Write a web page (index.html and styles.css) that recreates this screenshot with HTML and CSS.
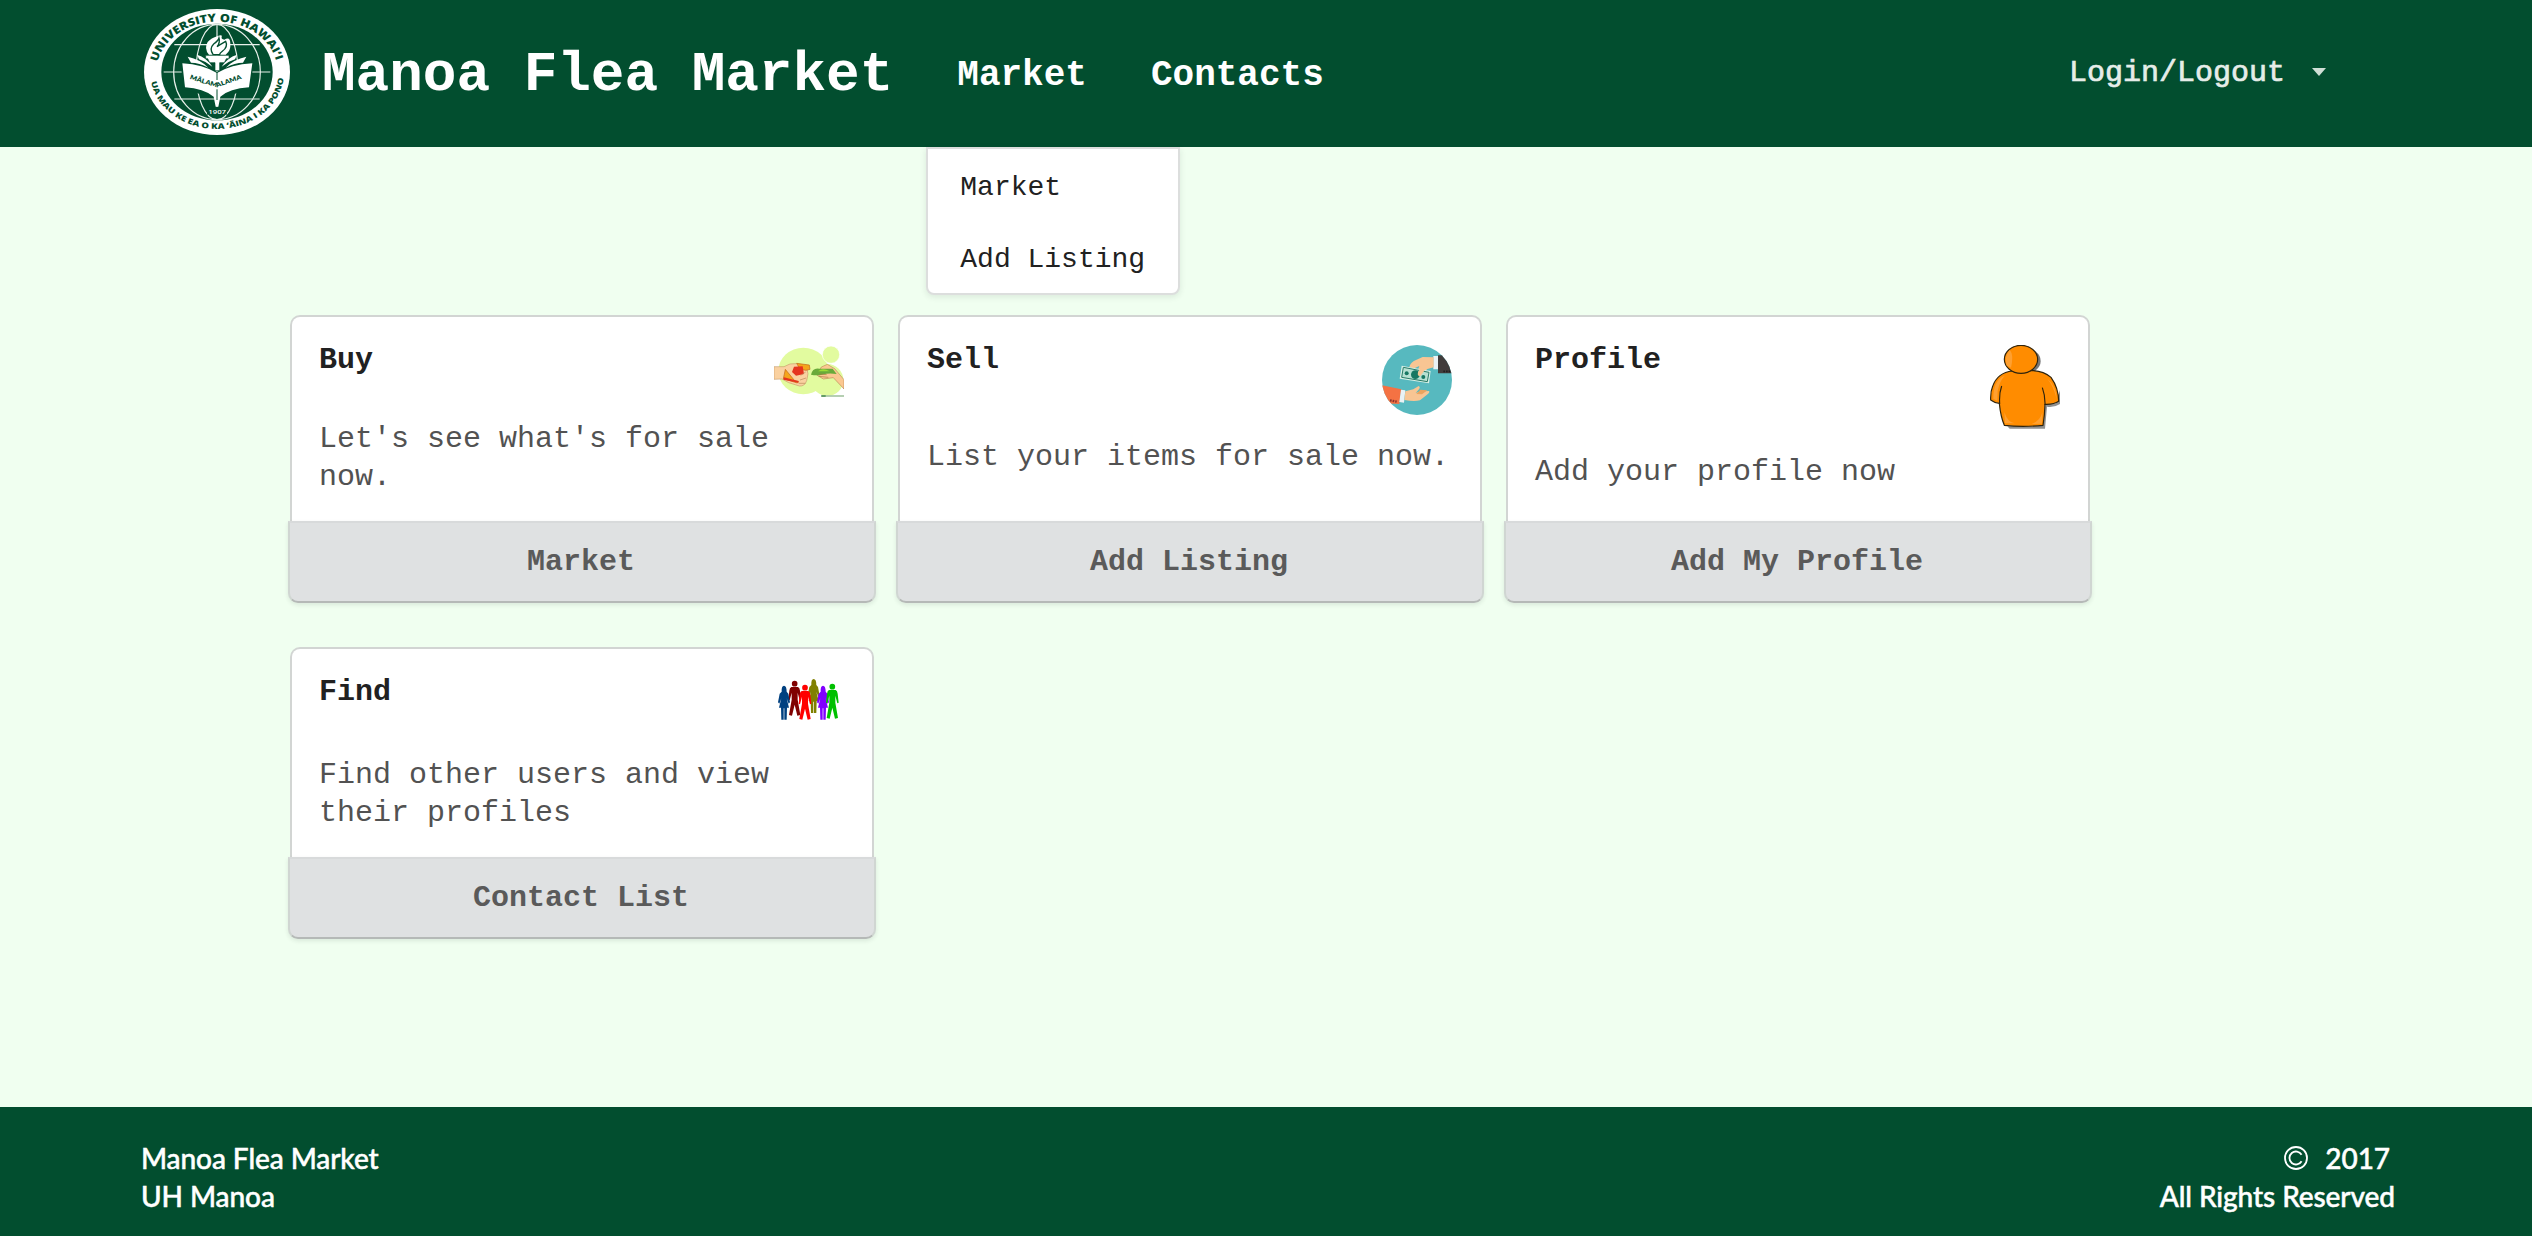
FILE: index.html
```html
<!DOCTYPE html>
<html lang="en">
<head>
<meta charset="utf-8">
<title>Manoa Flea Market</title>
<link rel="stylesheet" href="styles.css">
</head>
<body>
<header class="topbar">
  <svg class="seal" viewBox="40 24 444 384" role="img" aria-label="University of Hawaii seal">
    <defs>
      <path id="arc-top" d="M80 216A182 151 0 0 1 444 216"/>
      <path id="arc-bottom" d="M61 216A201 171 0 0 0 463 216"/>
      <path id="book-line" d="M180 236Q205 246 262 262Q310 246 346 232"/>
    </defs>
    <ellipse cx="262" cy="216" rx="219" ry="189" fill="#fff"/>
    <ellipse cx="262" cy="216" rx="167" ry="145" fill="#024e2f"/>
    <g fill="none" stroke="#e7f0ea" stroke-width="3.5">
      <ellipse cx="262" cy="216" rx="130" ry="143"/>
      <ellipse cx="262" cy="216" rx="63" ry="143"/>
      <path d="M102 216H422M134 134H390M134 297H390M262 72V320"/>
    </g>
    <path d="M176 168L262 216L348 168L370 192L364 268L262 296L160 268L154 192Z" fill="#024e2f"/>
    <path d="M158 190Q220 194 262 219Q304 194 368 190L358 262Q300 266 272 290L266 320H258L252 290Q222 266 166 262Z" fill="#fff"/>
    <path d="M174 170Q212 178 236 203Q208 188 184 188ZM202 164Q230 172 248 200Q228 184 208 178ZM350 170Q312 178 288 203Q316 188 340 188ZM322 164Q294 172 276 200Q296 184 316 178Z" fill="#fff"/>
    <path d="M228 166H298V176H290L284 188H270V212H256V188H240L234 176H228Z" fill="#fff" stroke="#024e2f" stroke-width="2"/>
    <path d="M238 164Q222 146 234 126Q244 114 264 108Q280 102 276 111Q274 118 284 119Q302 108 302 132Q304 152 288 164Z" fill="#fff"/>
    <path d="M250 163Q238 146 252 132Q266 122 268 114Q272 128 262 140Q274 132 288 124Q296 140 278 154Q270 160 270 164Z" fill="#fff" stroke="#024e2f" stroke-width="4"/>
    <path d="M262 216V240M262 268V300" stroke="#024e2f" stroke-width="3"/>
    <path d="M232 324H292V344H232Z" fill="#024e2f"/>
    <g class="seal-text">
      <text font-size="33"><textPath href="#arc-top" startOffset="30" textLength="460" lengthAdjust="spacingAndGlyphs">UNIVERSITY OF HAWAI‘I</textPath></text>
      <text font-size="23"><textPath href="#arc-bottom" startOffset="30" textLength="536" lengthAdjust="spacingAndGlyphs">UA MAU KE EA O KA ‘ĀINA I KA PONO</textPath></text>
      <text class="seal-motto" font-size="19"><textPath href="#book-line" textLength="165" lengthAdjust="spacingAndGlyphs">MĀLAMALAMA</textPath></text>
      <text x="236" y="341" font-size="18" textLength="53" lengthAdjust="spacingAndGlyphs" class="seal-year">1907</text>
    </g>
  </svg>
  <h1 class="brand">Manoa Flea Market</h1>
  <nav class="nav">
    <div class="nav-item">
      <a class="nav-link">Market</a>
      <div class="menu">
        <a class="menu-item">Market</a>
        <a class="menu-item">Add Listing</a>
      </div>
    </div>
    <div class="nav-item"><a class="nav-link">Contacts</a></div>
  </nav>
  <div class="login">Login/Logout<svg class="caret" viewBox="0 0 14 8"><path d="M0 0H14L7 8Z" fill="#d0dfd6"/></svg></div>
</header>

<main class="cards">
  <article class="card">
    <div class="card-body">
      <div class="card-head">
        <h2 class="card-title">Buy</h2>
        <svg class="pic-buy" viewBox="42 45 210 156">
          <g fill="#e2fb9f"><ellipse cx="130" cy="123" rx="75" ry="70"/><circle cx="202" cy="150" r="48"/><circle cx="213" cy="74" r="26" stroke="#fff" stroke-width="2"/></g>
          <path d="M42 110L72 110Q90 98 110 101L140 113Q148 130 140 152Q134 170 118 168L86 158L66 147L42 148Z" fill="#fad1a0" stroke="#b98a58" stroke-width="1.5"/>
          <path d="M110 100L148 105L150 118L138 121L120 118ZM76 118L104 152L116 154L112 159L70 146Z" fill="#f4a51c" stroke="#c3641a" stroke-width="2"/>
          <path d="M102 110L128 109L132 132L108 137L96 126ZM72 142L114 153L116 158L70 149Z" fill="#e5341f"/>
          <path d="M122 136L137 126M120 150L138 144M116 160L136 160" stroke="#b98a58" stroke-width="2"/>
          <path d="M170 135L184 111L202 103L224 116L252 149V177L220 143L190 147Z" fill="#fbc891" stroke="#a97742" stroke-width="1.5"/>
          <path d="M153 134Q158 112 178 116L218 116L230 132Q205 128 187 134Q170 138 153 134Z" fill="#69aa3a"/>
          <path d="M174 124Q188 111 209 124Z" fill="#9bdd35"/>
          <path d="M178 132L200 134M176 139L205 142" stroke="#a97742" stroke-width="2"/>
          <path d="M184 198H252" stroke="#a6c6a3" stroke-width="5"/><path d="M184 198H197" stroke="#54925a" stroke-width="5"/>
        </svg>
      </div>
      <p class="card-text">Let's see what's for sale now.</p>
    </div>
    <button class="card-button">Market</button>
  </article>

  <article class="card">
    <div class="card-body">
      <div class="card-head">
        <h2 class="card-title">Sell</h2>
        <svg class="pic-sell" viewBox="36 45 210 210">
          <defs><clipPath id="disc"><circle cx="141" cy="150" r="105"/></clipPath></defs>
          <g clip-path="url(#disc)">
            <path d="M36 45H246V255H36Z" fill="#57b9bf"/>
            <path d="M204 76H250V130H204Z" fill="#413c3b"/><path d="M220 124H243" stroke="#221f20" stroke-width="5" stroke-dasharray="5 3"/>
            <path d="M190 78H204V118H190Z" fill="#e9f2f5"/>
            <path d="M118 110Q124 95 138 90L158 81L191 82V112L172 117L150 138L140 130L148 108L130 116Z" fill="#f8c593"/>
            <path d="M95 107L182 123L177 160L89 146Z" fill="#d9f0e6"/>
            <path d="M100 112L177 127L172 155L95 142Z" fill="#b7e0d2" stroke="#287b67" stroke-width="3"/>
            <circle cx="136" cy="134" r="13" fill="#187762"/><circle cx="110" cy="130" r="6" fill="#187762"/><circle cx="160" cy="141" r="6" fill="#187762"/>
            <path d="M140 98L168 92L170 113L151 138Q141 140 144 127L153 110Z" fill="#f8c593"/>
            <path d="M36 166L94 178L88 222L36 220Z" fill="#f47243"/><path d="M60 211L80 215" stroke="#8a332b" stroke-width="7" stroke-dasharray="5 3"/>
            <path d="M93 179L106 181L102 218L88 216Z" fill="#e9f2f5"/>
            <path d="M106 184L130 178L146 168Q153 171 145 180L137 189L151 184Q157 176 162 184L177 183Q181 188 170 195L150 211Q133 216 103 210Z" fill="#f8c593"/>
            <path d="M139 192L151 179L172 181L156 193Z" fill="#eba45e"/>
          </g>
        </svg>
      </div>
      <p class="card-text">List your items for sale now.</p>
    </div>
    <button class="card-button">Add Listing</button>
  </article>

  <article class="card">
    <div class="card-body">
      <div class="card-head">
        <h2 class="card-title">Profile</h2>
        <svg class="pic-profile" viewBox="60 45 210 255">
          <path d="M112 289L119 296H225L231 230Q254 233 270 222V180L258 220L226 223L218 286Z" fill="#555" opacity=".65"/>
          <ellipse cx="160" cy="93" rx="52" ry="40" fill="#777"/>
          <g fill="#ff8c00" stroke="#30240c" stroke-width="3.5" stroke-linejoin="round">
            <path d="M128 123Q82 128 68 169Q61 185 62 210Q74 219 88 220Q92 260 103 286Q158 292 219 286Q224 256 225 223Q252 224 266 214Q266 174 243 142Q222 124 190 122Z"/>
            <path d="M95 168Q87 190 89 222M217 173Q226 198 225 225" fill="none"/>
            <ellipse cx="153" cy="88" rx="50" ry="42"/>
          </g>
          <path d="M110 107Q102 80 119 60Q132 73 123 113ZM70 206Q69 151 104 137Q89 153 83 182L82 213ZM232 146Q259 168 260 208Q252 170 232 146ZM103 247Q114 279 134 280L105 280ZM217 247Q211 273 185 282L216 281Z" fill="#ffa030"/>
        </svg>
      </div>
      <p class="card-text">Add your profile now</p>
    </div>
    <button class="card-button">Add My Profile</button>
  </article>

  <article class="card">
    <div class="card-body">
      <div class="card-head">
        <h2 class="card-title">Find</h2>
        <svg class="pic-find" viewBox="42 54 210 168">
          <defs>
            <g id="man"><circle cx="0" cy="9" r="8.5"/><path d="M-10 19H10Q15 21 16 30L19 57L15 59L9 36V57L17 103L8 105L0 72L-8 105L-17 103L-9 57V36L-15 59L-19 57L-16 30Q-15 21-10 19Z"/></g>
            <g id="woman"><path d="M-7 18Q-8 0 0 0Q8 0 8 18L13 24L18 50L14 54L8 38L15 66H9L8 102H1V68H-1V102H-8L-9 66H-15L-8 38L-14 54L-18 50L-13 24Z"/></g>
          </defs>
          <use href="#man" x="104" y="65" fill="#800000"/>
          <use href="#woman" x="161" y="60" fill="#808000"/>
          <use href="#woman" x="72" y="80" fill="#004080"/>
          <use href="#man" x="135" y="77" fill="#f00"/>
          <use href="#woman" x="189" y="80" fill="#8000ff"/>
          <use href="#man" x="217" y="74" fill="#00c000"/>
        </svg>
      </div>
      <p class="card-text">Find other users and view their profiles</p>
    </div>
    <button class="card-button">Contact List</button>
  </article>
</main>

<footer class="footer">
  <div>Manoa Flea Market<br>UH Manoa</div>
  <div class="footer-right">
    <div class="copyright">
      <svg class="copy-icon" viewBox="0 0 24 24" fill="none" stroke="#fff" stroke-width="1.8"><circle cx="12" cy="12" r="11"/><path d="M17.6 8.8A6.5 6.5 0 1 0 17.6 15.2"/></svg>
      <span>2017</span>
    </div>
    <div>All Rights Reserved</div>
  </div>
</footer>
</body>
</html>
```
FILE: styles.css
```css
* { box-sizing: border-box; }

body {
  margin: 0;
  min-height: 1236px;
  display: flex;
  flex-direction: column;
  background: #f0fff0;
  font-family: "Courier New", "Liberation Mono", monospace;
}

h1, h2, p { margin: 0; }

.topbar {
  height: 147px;
  padding: 0 206px 0 143px;
  display: flex;
  align-items: center;
  background: #024e2f;
  color: #fff;
}

.seal { width: 148px; height: 128px; margin-top: -3px; }
.seal-text { font-family: "Open Sans", sans-serif; font-weight: 800; fill: #024e2f; }
.seal-motto { font-family: Lato, sans-serif; }
.seal-year { fill: #fff; font-weight: 600; }

.brand { margin: 2px 0 0 31px; font-size: 56px; line-height: 60px; white-space: nowrap; }

.nav { display: flex; align-self: stretch; margin-left: 32px; }
.nav-item { position: relative; display: flex; align-items: center; padding: 4px 32px 0; }
.nav-link { font-size: 36px; font-weight: 700; }

.menu {
  position: absolute;
  top: 147px;
  left: 1px;
  width: 254px;
  height: 148px;
  padding-top: 3px;
  background: #fff;
  border: 2px solid #dcdedd;
  border-radius: 0 0 8px 8px;
  box-shadow: 0 2px 6px rgba(34, 36, 38, .1);
  color: #212121;
}
.menu-item { display: block; padding: 0 32px; font-size: 28px; line-height: 72px; white-space: nowrap; }

.login { display: flex; align-items: center; margin: -2px 0 0 auto; color: #e6ede9; font-size: 30px; -webkit-text-stroke: .7px #e6ede9; }
.caret { width: 14px; height: 8px; margin: -2px 0 0 27px; }

.cards {
  flex: 1;
  display: grid;
  grid-template-columns: repeat(3, 588px);
  gap: 44px 20px;
  align-content: start;
  padding: 168px 0 0 288px;
}

.card { display: flex; flex-direction: column; }
.card-body {
  flex: 1;
  margin: 0 2px;
  padding: 28px 28px 25px 27px;
  border: 2px solid #d2d5d3;
  border-bottom: 0;
  border-radius: 10px 10px 0 0;
  background: #fff;
}
.card-head { display: flex; justify-content: space-between; align-items: flex-start; }
.card-title { color: #212121; font-size: 30px; line-height: 30px; }
.card-text { margin-top: 23px; color: #525252; font-size: 30px; line-height: 38px; }

.pic-buy { width: 70px; height: 52px; }
.pic-sell { width: 70px; height: 70px; }
.pic-profile { width: 70px; height: 85px; }
.pic-find { width: 70px; height: 56px; }

.card-button {
  height: 82px;
  padding: 0 2px 0 0;
  background: #dfe1e2;
  border: 2px solid #d0d6d2;
  border-top-color: #d8dadb;
  border-bottom-color: #b5b9b7;
  border-radius: 0 0 10px 10px;
  box-shadow: 0 2px 4px rgba(34, 36, 38, .1);
  color: #5a5a5a;
  font: 700 30px "Courier New", "Liberation Mono", monospace;
}

.footer {
  height: 129px;
  padding: 32px 137px 0 141px;
  display: flex;
  justify-content: space-between;
  background: #024e2f;
  color: #fff;
  font: 500 28px/38px Lato, sans-serif;
  letter-spacing: -.08px;
  -webkit-text-stroke: .5px #fff;
}
.footer-right { text-align: right; }
.copyright { display: flex; justify-content: flex-end; align-items: center; gap: 17px; padding-right: 5px; }
.copy-icon { width: 24px; height: 24px; }
```
